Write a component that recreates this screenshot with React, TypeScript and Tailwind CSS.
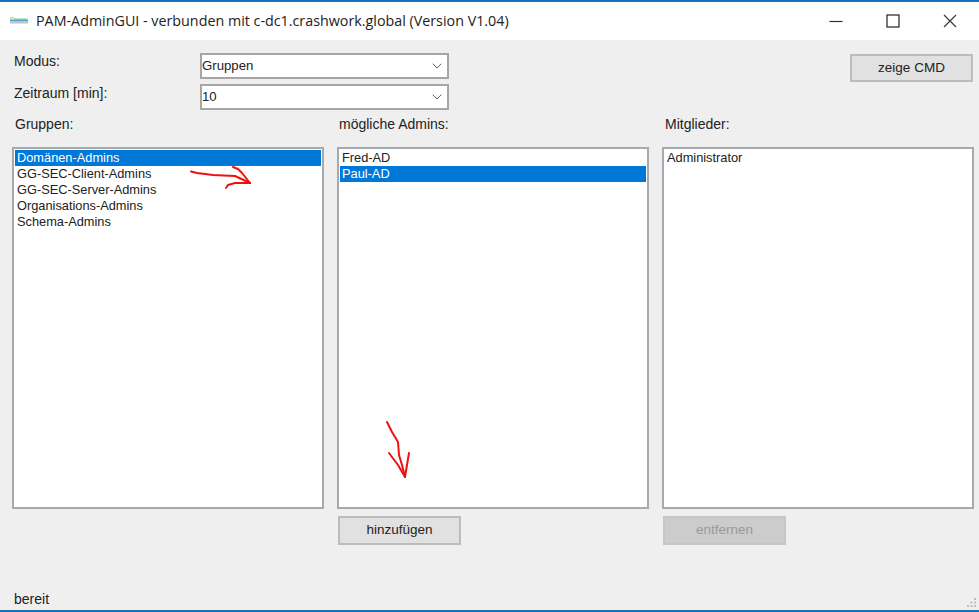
import { ChevronDown } from 'lucide-react';

const font = { fontFamily: '"Liberation Sans", Arial, sans-serif' };

function Combo({ value }: { value: string }) {
  return (
    <div className="flex items-center justify-between w-[249px] h-[26px] bg-white border-2 border-[#a6a6a6] pl-[0px] pr-[2px] text-[13.2px] text-[#222]">
      <span>{value}</span>
      <ChevronDown size={16} strokeWidth={1.4} className="text-[#555]" />
    </div>
  );
}

function ListBox({ items, selected }: { items: string[]; selected?: number }) {
  return (
    <div className="w-[312px] h-[362px] bg-white border-2 border-[#a6a9ad] p-[1px] text-[12.8px] leading-[16px] text-[#222]">
      {items.map((t, i) => (
        <div key={t} className={`pl-[2px] h-[16px] ${i === selected ? 'bg-[#0078d7] text-white' : ''}`}>
          {t}
        </div>
      ))}
    </div>
  );
}

function Btn({ label, disabled, short }: { label: string; disabled?: boolean; short?: boolean }) {
  return (
    <div
      className={`flex items-center justify-center w-[123px] border-2 text-[13.5px] ${short ? 'h-[28px]' : 'h-[29px]'} ${
        disabled ? 'bg-[#cccccc] border-[#c6c6c6] text-[#9a9a9a]' : 'bg-[#e1e1e1] border-[#bcbcbc] text-[#222]'
      }`}
    >
      {label}
    </div>
  );
}

export default function App() {
  return (
    <div style={font} className="relative w-[979px] h-[612px] overflow-hidden bg-[#efefef] flex flex-col">
      <div className="h-[2px] bg-[#1a6fb5]" />

      {/* title bar */}
      <div className="flex items-center h-[38px] bg-white">
        <svg width="20" height="8" viewBox="0 0 20 8" className="ml-[9px] mr-[7px]">
          <path d="M1 1.5 L4 0.5 L6 2 L18 2" fill="none" stroke="#8cc68c" strokeWidth="1" />
          <rect x="1" y="2.5" width="18" height="2" fill="#4f9fd0" />
          <rect x="1" y="4.5" width="18" height="2" fill="#b9c4cc" />
        </svg>
        <span style={{ fontFamily: '"Open Sans", sans-serif' }} className="text-[14.3px] text-[#222] whitespace-nowrap">
          PAM-AdminGUI - verbunden mit c-dc1.crashwork.global (Version V1.04)
        </span>
        <div className="ml-auto flex items-center h-full text-[#222]">
          <div className="flex items-center justify-center w-[58px]">
            <svg width="14" height="14" viewBox="0 0 14 14"><path d="M0.5 7.5H13.5" stroke="#333" strokeWidth="1.2" /></svg>
          </div>
          <div className="flex items-center justify-center w-[56px]">
            <svg width="14" height="14" viewBox="0 0 14 14"><rect x="1" y="1" width="12" height="12" fill="none" stroke="#222" strokeWidth="1.2" /></svg>
          </div>
          <div className="flex items-center justify-center w-[58px]">
            <svg width="14" height="14" viewBox="0 0 14 14"><path d="M1 1L13 13M13 1L1 13" stroke="#333" strokeWidth="1.1" /></svg>
          </div>
        </div>
      </div>

      {/* form */}
      <div className="flex-1 flex flex-col pl-[12px] pr-[5px]">
        <div className="flex items-start mt-[13px] text-[14px] leading-[16px] text-[#222]">
          <div className="flex flex-col gap-[5px] ml-[2px]">
            <div className="w-[186px] h-[26px]">Modus:</div>
            <div className="w-[186px] h-[26px] pt-[1px]">Zeitraum [min]:</div>
          </div>
          <div className="flex flex-col gap-[5px]">
            <Combo value="Gruppen" />
            <Combo value="10" />
          </div>
          <div className="ml-auto mr-[1px] mt-[1px]">
            <Btn label="zeige CMD" short />
          </div>
        </div>

        <div className="grid grid-cols-[312px_312px_312px] gap-x-[13px] mt-[6px]">
          <div className="h-[31px] pl-[3px] text-[14px] leading-[16px] text-[#222]">Gruppen:</div>
          <div className="h-[31px] pl-[2px] text-[14px] leading-[16px] text-[#222]">mögliche Admins:</div>
          <div className="h-[31px] pl-[3px] text-[14px] leading-[16px] text-[#222]">Mitglieder:</div>

          <ListBox
            selected={0}
            items={['Domänen-Admins', 'GG-SEC-Client-Admins', 'GG-SEC-Server-Admins', 'Organisations-Admins', 'Schema-Admins']}
          />
          <ListBox selected={1} items={['Fred-AD', 'Paul-AD']} />
          <ListBox items={['Administrator']} />

          <div />
          <div className="mt-[7px] ml-[1px]"><Btn label="hinzufügen" /></div>
          <div className="mt-[7px] ml-[1px]"><Btn label="entfernen" disabled /></div>
        </div>

        <div className="mt-auto mb-[3px] ml-[2px] text-[14px] leading-[16px] text-[#222]">bereit</div>
      </div>

      {/* bottom window edge */}
      <div className="h-[2px] bg-[#1a6fb5]" />

      {/* resize grip */}
      <svg width="10" height="10" viewBox="0 0 10 10" className="absolute right-[2px] bottom-[4px]" fill="#bdbdbd">
        <rect x="7" y="0" width="2" height="2" />
        <rect x="3.5" y="3.5" width="2" height="2" />
        <rect x="7" y="3.5" width="2" height="2" />
        <rect x="0" y="7" width="2" height="2" />
        <rect x="3.5" y="7" width="2" height="2" />
        <rect x="7" y="7" width="2" height="2" />
      </svg>

      {/* red annotation arrows */}
      <svg width="979" height="612" viewBox="0 0 979 612" className="absolute inset-0 pointer-events-none" fill="none" stroke="#f01010" strokeWidth="2" strokeLinecap="round" strokeLinejoin="round">
        <path d="M191 171.5 L197 173 L213 175 L235 176 L250 183" />
        <path d="M233 167 L238 169 L242 173 L246 178 L250 183" />
        <path d="M250 183 L235 183 L228 185 L226 188" />
        <path d="M387 422 L392 432 L398 442 L399 455 L402 465 L405 477" />
        <path d="M389 453 L398 465 L405 477 L407 465 L409 453" />
      </svg>
    </div>
  );
}
